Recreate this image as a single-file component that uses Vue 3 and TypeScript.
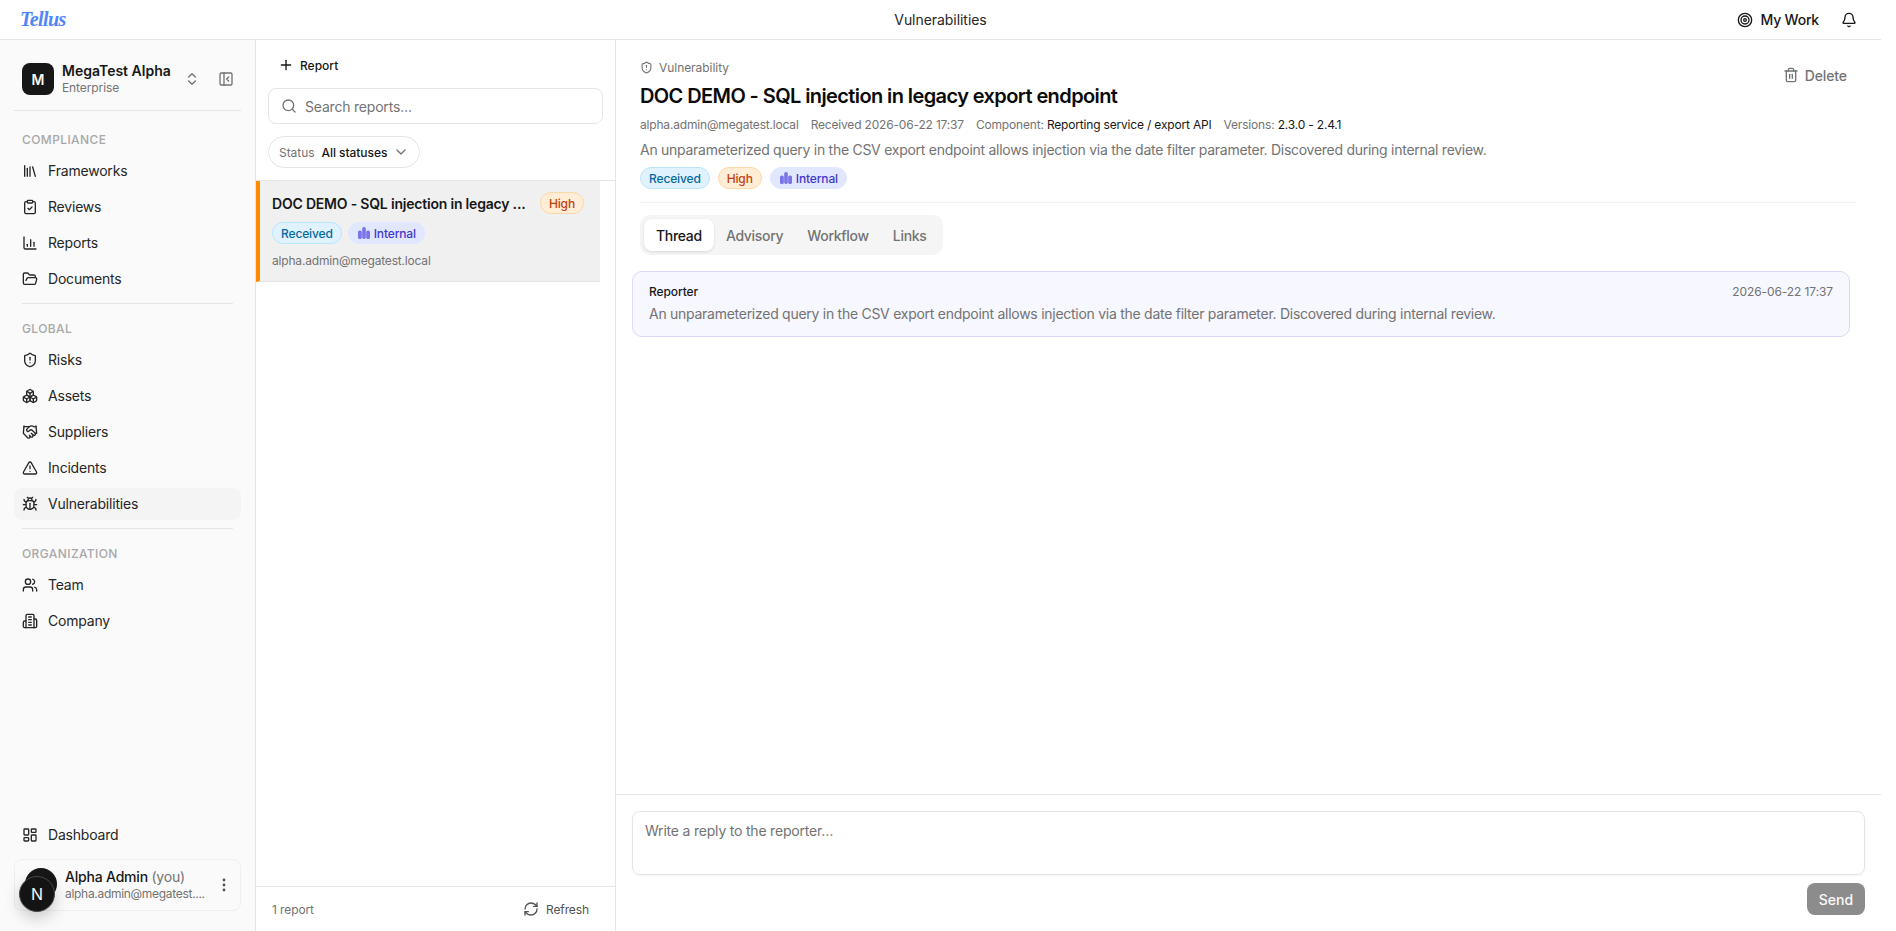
<template>
  <div class="app">
    <header class="topbar">
      <div class="logo">Tellus</div>
      <div class="page-title">Vulnerabilities</div>
      <div class="top-actions">
        <span class="my-work">
          <svg class="ic" viewBox="0 0 24 24"><circle cx="12" cy="12" r="10" /><circle cx="12" cy="12" r="6" /><circle cx="12" cy="12" r="2" /></svg>
          My Work
        </span>
        <svg class="ic bell" viewBox="0 0 24 24"><path d="M10.268 21a2 2 0 0 0 3.464 0" /><path d="M3.262 15.326A1 1 0 0 0 4 17h16a1 1 0 0 0 .74-1.673C19.41 13.956 18 12.499 18 8A6 6 0 0 0 6 8c0 4.499-1.411 5.956-2.738 7.326" /></svg>
      </div>
    </header>

    <div class="body">
      <aside class="sidebar">
        <div class="tenant">
          <div class="tenant-logo">M</div>
          <div class="tenant-text">
            <div class="tenant-name">MegaTest Alpha</div>
            <div class="tenant-plan">Enterprise</div>
          </div>
          <svg class="ic tiny muted" viewBox="0 0 24 24"><path d="m7 15 5 5 5-5" /><path d="m7 9 5-5 5 5" /></svg>
          <svg class="ic tiny muted panel" viewBox="0 0 24 24"><rect x="3" y="3" width="18" height="18" rx="2" /><path d="M9 3v18" /><path d="m16 15-3-3 3-3" /></svg>
        </div>

        <template v-for="(group, gi) in navGroups" :key="group.label">
          <div class="nav-sep" :class="{ first: gi === 0 }" />
          <div class="nav-label">{{ group.label }}</div>
          <div
            v-for="item in group.items"
            :key="item.name"
            class="nav-item"
            :class="{ active: item.name === 'Vulnerabilities' }"
          >
            <svg class="ic" viewBox="0 0 24 24" v-html="item.icon" />
            <span>{{ item.name }}</span>
          </div>
        </template>

        <div class="side-bottom">
          <div class="nav-item">
            <svg class="ic" viewBox="0 0 24 24"><rect x="3" y="3" width="7" height="9" rx="1" /><rect x="14" y="3" width="7" height="5" rx="1" /><rect x="14" y="12" width="7" height="9" rx="1" /><rect x="3" y="16" width="7" height="5" rx="1" /></svg>
            <span>Dashboard</span>
          </div>
          <div class="user-card">
            <div class="avatar-slot" />
            <div class="user-text">
              <div class="user-name">Alpha Admin <span class="you">(you)</span></div>
              <div class="user-mail">alpha.admin@megatest....</div>
            </div>
            <svg class="dots" viewBox="0 0 4 16"><circle cx="2" cy="3" r="1.4" /><circle cx="2" cy="8" r="1.4" /><circle cx="2" cy="13" r="1.4" /></svg>
          </div>
        </div>
        <div class="dev-badge">N</div>
      </aside>

      <section class="list-col">
        <div class="list-head">
          <div class="add-report">
            <svg class="ic" viewBox="0 0 24 24"><path d="M5 12h14" /><path d="M12 5v14" /></svg>
            Report
          </div>
          <div class="search">
            <svg class="ic" viewBox="0 0 24 24"><circle cx="11" cy="11" r="8" /><path d="m21 21-4.3-4.3" /></svg>
            <span>Search reports…</span>
          </div>
          <div class="status-pill">
            <span class="status-key">Status</span>
            <span>All statuses</span>
            <svg class="ic tiny muted" viewBox="0 0 24 24"><path d="m6 9 6 6 6-6" /></svg>
          </div>
        </div>
        <div class="list-scroll">
          <div class="report-row">
            <div class="report-top">
              <span class="report-title">DOC DEMO - SQL injection in legacy ...</span>
              <span class="tag high">High</span>
            </div>
            <div class="report-tags">
              <span class="tag received">Received</span>
              <span class="tag internal">
                <svg class="org-ic" viewBox="0 0 14 14"><rect x="1" y="4.5" width="3.8" height="8.5" rx="1.6" /><rect x="5.2" y="1" width="3.6" height="12" rx="1.7" /><rect x="9.2" y="4.5" width="3.8" height="8.5" rx="1.6" /></svg>
                Internal
              </span>
            </div>
            <div class="report-mail">alpha.admin@megatest.local</div>
          </div>
        </div>
        <div class="list-foot">
          <span>1 report</span>
          <span class="refresh">
            <svg class="ic" viewBox="0 0 24 24"><path d="M3 12a9 9 0 0 1 9-9 9.75 9.75 0 0 1 6.74 2.74L21 8" /><path d="M21 3v5h-5" /><path d="M21 12a9 9 0 0 1-9 9 9.75 9.75 0 0 1-6.74-2.74L3 16" /><path d="M8 16H3v5" /></svg>
            Refresh
          </span>
        </div>
      </section>

      <main class="detail">
        <div class="detail-head">
          <div class="head-top">
            <div class="crumb">
              <svg class="ic" viewBox="0 0 24 24"><path d="M20 13c0 5-3.5 7.5-7.66 8.95a1 1 0 0 1-.67-.01C7.5 20.5 4 18 4 13V6a1 1 0 0 1 1-1c2 0 4.5-1.2 6.24-2.72a1.17 1.17 0 0 1 1.52 0C14.51 3.81 17 5 19 5a1 1 0 0 1 1 1z" /><path d="M12 8v4" /><path d="M12 16h.01" /></svg>
              Vulnerability
            </div>
            <div class="delete">
              <svg class="ic" viewBox="0 0 24 24"><path d="M3 6h18" /><path d="M19 6v14c0 1-1 2-2 2H7c-1 0-2-1-2-2V6" /><path d="M8 6V4c0-1 1-2 2-2h4c1 0 2 1 2 2v2" /><path d="M10 11v6" /><path d="M14 11v6" /></svg>
              Delete
            </div>
          </div>
          <h1>DOC DEMO - SQL injection in legacy export endpoint</h1>
          <div class="meta">
            <span>alpha.admin@megatest.local</span>
            <span>Received 2026-06-22 17:37</span>
            <span>Component: <b>Reporting service / export API</b></span>
            <span>Versions: <b>2.3.0 - 2.4.1</b></span>
          </div>
          <p class="desc">{{ summary }}</p>
          <div class="head-tags">
            <span class="tag received">Received</span>
            <span class="tag high">High</span>
            <span class="tag internal">
              <svg class="org-ic" viewBox="0 0 14 14"><rect x="1" y="4.5" width="3.8" height="8.5" rx="1.6" /><rect x="5.2" y="1" width="3.6" height="12" rx="1.7" /><rect x="9.2" y="4.5" width="3.8" height="8.5" rx="1.6" /></svg>
              Internal
            </span>
          </div>
        </div>

        <div class="tabs">
          <span v-for="tab in tabs" :key="tab" class="tab" :class="{ on: tab === 'Thread' }">{{ tab }}</span>
        </div>

        <div class="thread">
          <div class="message">
            <div class="msg-top">
              <span class="msg-who">Reporter</span>
              <span class="msg-time">2026-06-22 17:37</span>
            </div>
            <div class="msg-text">{{ summary }}</div>
          </div>
        </div>

        <div class="composer">
          <div class="reply-box">Write a reply to the reporter…</div>
          <div class="send-row"><span class="send">Send</span></div>
        </div>
      </main>
    </div>
  </div>
</template>

<script setup lang="ts">
const summary =
  'An unparameterized query in the CSV export endpoint allows injection via the date filter parameter. Discovered during internal review.'

const tabs = ['Thread', 'Advisory', 'Workflow', 'Links']

const navGroups = [
  {
    label: 'COMPLIANCE',
    items: [
      { name: 'Frameworks', icon: '<path d="m16 6 4 14"/><path d="M12 6v14"/><path d="M8 8v12"/><path d="M4 4v16"/>' },
      { name: 'Reviews', icon: '<rect x="8" y="2" width="8" height="4" rx="1"/><path d="M16 4h2a2 2 0 0 1 2 2v14a2 2 0 0 1-2 2H6a2 2 0 0 1-2-2V6a2 2 0 0 1 2-2h2"/><path d="m9 14 2 2 4-4"/>' },
      { name: 'Reports', icon: '<path d="M3 3v16a2 2 0 0 0 2 2h16"/><path d="M8 17v-3"/><path d="M13 17V7"/><path d="M18 17v-6"/>' },
      { name: 'Documents', icon: '<path d="m6 14 1.5-2.9A2 2 0 0 1 9.24 10H20a2 2 0 0 1 1.94 2.5l-1.54 6a2 2 0 0 1-1.95 1.5H4a2 2 0 0 1-2-2V5a2 2 0 0 1 2-2h3.9a2 2 0 0 1 1.69.9l.81 1.2a2 2 0 0 0 1.67.9H18a2 2 0 0 1 2 2v2"/>' }
    ]
  },
  {
    label: 'GLOBAL',
    items: [
      { name: 'Risks', icon: '<path d="M20 13c0 5-3.5 7.5-7.66 8.95a1 1 0 0 1-.67-.01C7.5 20.5 4 18 4 13V6a1 1 0 0 1 1-1c2 0 4.5-1.2 6.24-2.72a1.17 1.17 0 0 1 1.52 0C14.51 3.81 17 5 19 5a1 1 0 0 1 1 1z"/><path d="M12 8v4"/><path d="M12 16h.01"/>' },
      { name: 'Assets', icon: '<path d="M2.97 12.92A2 2 0 0 0 2 14.63v3.24a2 2 0 0 0 .97 1.71l3 1.8a2 2 0 0 0 2.06 0L12 19v-5.5l-5-3-4.03 2.42Z"/><path d="m7 16.5-4.74-2.85"/><path d="m7 16.5 5-3"/><path d="M7 16.5v5.17"/><path d="M12 13.5V19l3.97 2.38a2 2 0 0 0 2.06 0l3-1.8a2 2 0 0 0 .97-1.71v-3.24a2 2 0 0 0-.97-1.71L17 10.5l-5 3Z"/><path d="m17 16.5-5-3"/><path d="m17 16.5 4.74-2.85"/><path d="M17 16.5v5.17"/><path d="M7.97 4.42A2 2 0 0 0 7 6.13v4.37l5 3 5-3V6.13a2 2 0 0 0-.97-1.71l-3-1.8a2 2 0 0 0-2.06 0l-3 1.8Z"/><path d="M12 8 7.26 5.15"/><path d="m12 8 4.74-2.85"/><path d="M12 13.5V8"/>' },
      { name: 'Suppliers', icon: '<path d="m11 17 2 2a1 1 0 1 0 3-3"/><path d="m14 14 2.5 2.5a1 1 0 1 0 3-3l-3.88-3.88a3 3 0 0 0-4.24 0l-.88.88a1 1 0 1 1-3-3l2.81-2.81a5.79 5.79 0 0 1 7.06-.87l.47.28a2 2 0 0 0 1.42.25L21 4"/><path d="m21 3 1 11h-2"/><path d="M3 3 2 14l6.5 6.5a1 1 0 1 0 3-3"/><path d="M3 4h8"/>' },
      { name: 'Incidents', icon: '<path d="m21.73 18-8-14a2 2 0 0 0-3.48 0l-8 14A2 2 0 0 0 4 21h16a2 2 0 0 0 1.73-3"/><path d="M12 9v4"/><path d="M12 17h.01"/>' },
      { name: 'Vulnerabilities', icon: '<path d="m8 2 1.88 1.88"/><path d="M14.12 3.88 16 2"/><path d="M9 7.13v-1a3.003 3.003 0 1 1 6 0v1"/><path d="M12 20c-3.3 0-6-2.7-6-6v-3a4 4 0 0 1 4-4h4a4 4 0 0 1 4 4v3c0 3.3-2.7 6-6 6"/><path d="M12 20v-9"/><path d="M6.53 9C4.6 8.8 3 7.1 3 5"/><path d="M6 13H2"/><path d="M3 21c0-2.1 1.7-3.9 3.8-4"/><path d="M20.97 5c0 2.1-1.6 3.8-3.5 4"/><path d="M22 13h-4"/><path d="M17.2 17c2.1.1 3.8 1.9 3.8 4"/>' }
    ]
  },
  {
    label: 'ORGANIZATION',
    items: [
      { name: 'Team', icon: '<path d="M16 21v-2a4 4 0 0 0-4-4H6a4 4 0 0 0-4 4v2"/><circle cx="9" cy="7" r="4"/><path d="M22 21v-2a4 4 0 0 0-3-3.87"/><path d="M16 3.13a4 4 0 0 1 0 7.75"/>' },
      { name: 'Company', icon: '<path d="M6 22V4a2 2 0 0 1 2-2h8a2 2 0 0 1 2 2v18Z"/><path d="M6 12H4a2 2 0 0 0-2 2v6a2 2 0 0 0 2 2h2"/><path d="M18 9h2a2 2 0 0 1 2 2v9a2 2 0 0 1-2 2h-2"/><path d="M10 6h4"/><path d="M10 10h4"/><path d="M10 14h4"/><path d="M10 18h4"/>' }
    ]
  }
]
</script>

<style>
html, body { margin: 0; background: #fff; }
</style>

<style scoped>
.app {
  width: 1881px;
  height: 931px;
  display: flex;
  flex-direction: column;
  overflow: hidden;
  font-family: Inter, "Noto Sans", sans-serif;
  color: #171717;
  background: #fff;
}

.ic {
  width: 16px;
  height: 16px;
  flex: none;
  fill: none;
  stroke: currentColor;
  stroke-width: 2;
  stroke-linecap: round;
  stroke-linejoin: round;
}
.muted { color: #737373; }

/* top bar */
.topbar {
  height: 39px;
  flex: none;
  display: flex;
  align-items: center;
  justify-content: space-between;
  position: relative;
  border-bottom: 1px solid #e5e5e5;
  padding: 0 24px 0 20px;
}
.logo {
  font-family: "Liberation Serif", serif;
  font-style: italic;
  font-weight: 700;
  font-size: 20px;
  letter-spacing: -0.6px;
  color: #4f86f7;
}
.page-title {
  position: absolute;
  left: 0;
  right: 0;
  text-align: center;
  font-size: 14px;
  letter-spacing: -0.05px;
  font-weight: 400;
  color: #262626;
  pointer-events: none;
}
.top-actions { display: flex; align-items: center; gap: 22px; }
.my-work {
  display: flex;
  align-items: center;
  gap: 7px;
  font-size: 14px;
  font-weight: 500;
  letter-spacing: -0.2px;
}
.bell { width: 16px; height: 16px; }

.body { flex: 1; display: flex; min-height: 0; }

/* sidebar */
.sidebar {
  width: 256px;
  flex: none;
  box-sizing: border-box;
  border-right: 1px solid #e5e5e5;
  background: #fafafa;
  display: flex;
  flex-direction: column;
  padding: 0 14px;
  position: relative;
}
.tenant {
  display: flex;
  align-items: center;
  gap: 8px;
  height: 70px;
  box-sizing: border-box;
  padding: 8px 8px 0;
}
.tenant-logo {
  width: 32px;
  height: 32px;
  border-radius: 8px;
  background: #171717;
  color: #fafafa;
  display: flex;
  align-items: center;
  justify-content: center;
  font-size: 14px;
  font-weight: 600;
  flex: none;
}
.tenant-text { flex: 1; min-width: 0; }
.tenant-name { font-size: 14px; font-weight: 600; line-height: 18px; }
.tenant-plan { font-size: 12px; color: #737373; line-height: 16px; letter-spacing: -0.1px; }
.panel { margin-left: 10px; margin-right: -1px; }

.nav-sep { height: 1px; background: #e5e5e5; margin: 4px 8px 0; }
.nav-sep.first { margin: 0; }
.nav-label {
  font-size: 12px;
  font-weight: 500;
  letter-spacing: 0.4px;
  color: #a8a8a8;
  height: 30px;
  line-height: 30px;
  padding: 0 8px;
  margin-top: 10px;
}
.nav-sep.first + .nav-label { margin-top: 14px; }
.nav-item {
  height: 32px;
  margin-bottom: 4px;
  display: flex;
  align-items: center;
  gap: 10px;
  padding: 0 8px;
  font-size: 14px;
  line-height: 18px;
  letter-spacing: -0.2px;
  color: #262626;
  border-radius: 8px;
}
.nav-item.active { background: #f4f4f4; }
.side-bottom { margin-top: auto; padding-bottom: 20px; }
.side-bottom .nav-item { margin-bottom: 8px; }
.user-card {
  height: 52px;
  box-sizing: border-box;
  border: 1px solid #efefef;
  border-radius: 8px;
  display: flex;
  align-items: center;
  padding: 0 14px 0 10px;
  gap: 8px;
}
.avatar-slot {
  width: 32px;
  height: 32px;
  border-radius: 50%;
  background: #171717;
  flex: none;
  margin-top: -2px;
}
.user-text { flex: 1; min-width: 0; }
.user-name { font-size: 14px; font-weight: 500; line-height: 18px; letter-spacing: -0.2px; }
.you { color: #737373; font-weight: 400; }
.user-mail { font-size: 12px; color: #737373; line-height: 16px; letter-spacing: -0.3px; }
.dots { width: 4px; height: 16px; fill: #525252; flex: none; }
.dev-badge {
  position: absolute;
  left: 19px;
  top: 836px;
  width: 36px;
  height: 36px;
  box-sizing: border-box;
  border-radius: 50%;
  background: #141414;
  color: #f5f5f5;
  border: 1px solid #4a4a4a;
  box-shadow: 0 6px 16px rgba(0, 0, 0, 0.2);
  display: flex;
  align-items: center;
  justify-content: center;
  font-size: 16px;
  font-weight: 400;
}

/* report list */
.list-col {
  width: 360px;
  flex: none;
  box-sizing: border-box;
  border-right: 1px solid #e5e5e5;
  display: flex;
  flex-direction: column;
}
.list-head {
  flex: none;
  padding: 11px 12px 12px;
  border-bottom: 1px solid #e5e5e5;
  display: flex;
  flex-direction: column;
  align-items: flex-start;
}
.add-report {
  height: 28px;
  display: flex;
  align-items: center;
  gap: 6px;
  padding: 0 10px;
  font-size: 12px;
  font-weight: 500;
}
.search {
  align-self: stretch;
  height: 36px;
  margin-top: 9px;
  box-sizing: border-box;
  border: 1px solid #e5e5e5;
  border-radius: 8px;
  display: flex;
  align-items: center;
  gap: 8px;
  padding: 0 12px;
  font-size: 14px;
  letter-spacing: -0.2px;
  color: #737373;
}
.status-pill {
  height: 32px;
  margin-top: 12px;
  box-sizing: border-box;
  border: 1px solid #e5e5e5;
  border-radius: 999px;
  display: flex;
  align-items: center;
  gap: 6px;
  padding: 0 10px;
  font-size: 12px;
  font-weight: 500;
  letter-spacing: -0.05px;
}
.status-key { color: #737373; font-weight: 400; margin-right: 1px; }
.list-scroll { flex: 1; min-height: 0; }
.report-row {
  width: 344px;
  height: 101px;
  box-sizing: border-box;
  background: #f0f0f0;
  border-left: 4px solid #ff8c00;
  border-bottom: 1px solid #e5e5e5;
  padding: 11px 16px 0 12px;
}
.report-top { display: flex; align-items: center; justify-content: space-between; }
.report-title {
  font-size: 14px;
  font-weight: 600;
  letter-spacing: -0.2px;
  white-space: nowrap;
}
.report-tags { display: flex; gap: 6px; margin-top: 8px; }
.report-mail { font-size: 12px; color: #737373; margin-top: 9px; letter-spacing: -0.18px; }
.list-foot {
  height: 44px;
  flex: none;
  border-top: 1px solid #e5e5e5;
  display: flex;
  align-items: center;
  justify-content: space-between;
  padding: 0 26px 0 16px;
  font-size: 12px;
  letter-spacing: -0.1px;
  color: #737373;
}
.refresh { display: flex; align-items: center; gap: 7px; color: #525252; }

/* badges */
.tag {
  height: 22px;
  box-sizing: border-box;
  display: inline-flex;
  align-items: center;
  gap: 3px;
  padding: 0 8px;
  border-radius: 999px;
  border: 1px solid transparent;
  font-size: 12px;
  font-weight: 500;
  letter-spacing: -0.14px;
  flex: none;
}
.received { background: #e0f2fe; border-color: #bae6fd; color: #0369a1; }
.high { background: #ffedd5; border-color: #fed7aa; color: #c2410c; }
.internal { background: #e0e7ff; border-color: #e0e7ff; color: #4338ca; }
.org-ic { width: 14px; height: 14px; fill: #7a74e8; flex: none; }

/* detail */
.detail { flex: 1; min-width: 0; display: flex; flex-direction: column; }
.detail-head {
  margin: 0 24px;
  padding-top: 19px;
  height: 143px;
  flex: none;
  border-bottom: 1px solid #f0f0f0;
}
.head-top { display: flex; justify-content: space-between; height: 16px; align-items: center; }
.crumb {
  display: flex;
  align-items: center;
  gap: 6px;
  font-size: 12px;
  letter-spacing: -0.05px;
  color: #737373;
}
.crumb .ic { width: 13px; height: 13px; }
.delete {
  display: flex;
  align-items: center;
  gap: 6px;
  font-size: 14px;
  font-weight: 500;
  letter-spacing: -0.1px;
  color: #737373;
  margin: 16px 10px 0 0;
}
h1 {
  margin: 7px 0 0;
  font-size: 20px;
  line-height: 28px;
  font-weight: 600;
  color: #0a0a0a;
  letter-spacing: -0.6px;
}
.meta {
  display: flex;
  gap: 12px;
  margin-top: 7px;
  font-size: 12px;
  line-height: 16px;
  letter-spacing: -0.18px;
  color: #737373;
}
.meta b { font-weight: 400; color: #171717; }
.desc { margin: 7px 0 0; font-size: 14px; line-height: 20px; letter-spacing: -0.27px; color: #737373; }
.head-tags { display: flex; gap: 8px; margin-top: 7px; }

.tabs {
  align-self: flex-start;
  margin: 12px 0 0 24px;
  height: 40px;
  box-sizing: border-box;
  padding: 4px;
  display: flex;
  background: #f5f5f5;
  border-radius: 10px;
  flex: none;
}
.tab {
  height: 32px;
  padding: 0 12px;
  display: flex;
  align-items: center;
  font-size: 14px;
  font-weight: 500;
  letter-spacing: -0.3px;
  color: #737373;
  border-radius: 8px;
}
.tab.on { background: #fff; color: #171717; box-shadow: 0 1px 3px rgba(0, 0, 0, 0.12); }

.thread { flex: 1; min-height: 0; padding: 16px 31px 0 16px; }
.message {
  height: 66px;
  box-sizing: border-box;
  background: #f6f7ff;
  border: 1px solid #d9d9f6;
  border-radius: 10px;
  padding: 12px 16px 0 16px;
}
.msg-top { display: flex; justify-content: space-between; font-size: 12px; line-height: 16px; letter-spacing: -0.1px; }
.msg-who { font-weight: 500; }
.msg-time { color: #737373; }
.msg-text { margin-top: 4px; font-size: 14px; line-height: 20px; letter-spacing: -0.27px; color: #737373; }

.composer {
  flex: none;
  height: 137px;
  box-sizing: border-box;
  border-top: 1px solid #e5e5e5;
  padding: 16px 16px 0;
}
.reply-box {
  height: 64px;
  box-sizing: border-box;
  border: 1px solid #e5e5e5;
  border-radius: 8px;
  padding: 9px 12px;
  font-size: 14px;
  line-height: 20px;
  letter-spacing: -0.2px;
  color: #737373;
  box-shadow: 0 1px 2px rgba(0, 0, 0, 0.05);
}
.send-row { display: flex; justify-content: flex-end; margin-top: 8px; }
.send {
  width: 58px;
  height: 32px;
  display: flex;
  align-items: center;
  justify-content: center;
  background: #8c8c8c;
  color: #fafafa;
  font-size: 14px;
  font-weight: 500;
  border-radius: 8px;
}
</style>
